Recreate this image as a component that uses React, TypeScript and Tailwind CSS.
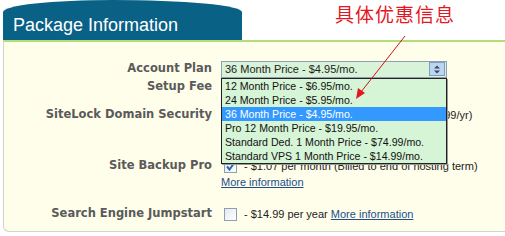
import React from 'react';

const plans = [
  '12 Month Price - $6.95/mo.',
  '24 Month Price - $5.95/mo.',
  '36 Month Price - $4.95/mo.',
  'Pro 12 Month Price - $19.95/mo.',
  'Standard Ded. 1 Month Price - $74.99/mo.',
  'Standard VPS 1 Month Price - $14.99/mo.',
];

function Checkbox({ checked }: { checked?: boolean }) {
  return (
    <div className="w-[13px] h-[13px] border border-[#8a9fb5] bg-gradient-to-br from-[#e6e9ee] to-white flex items-center justify-center shrink-0">
      {checked && (
        <svg width="11" height="11" viewBox="0 0 11 11">
          <path d="M2 5.5 L4.5 8.5 L9.5 1.5" fill="none" stroke="#2b66b8" strokeWidth="2" />
        </svg>
      )}
    </div>
  );
}

export default function App() {
  const label = "w-[208px] text-right font-bold text-[#5a5a5a] text-[11.5px] shrink-0";
  const verdana = { fontFamily: '"DejaVu Sans", Verdana, sans-serif' };
  return (
    <div className="relative w-[505px] h-[236px] bg-white overflow-hidden" style={{ fontFamily: '"Liberation Sans", Arial, sans-serif' }}>
      {/* header tab */}
      <div className="ml-[3px] w-[239px] h-[40px] bg-[#0a6186] rounded-tl-[110px_12px] rounded-tr-[129px_12px] text-white text-[18px] leading-none pl-[10px] pt-[16px]">
        Package Information
      </div>

      <div className="absolute left-[335px] top-[4px] text-[19px] tracking-[1px] leading-none text-[#e3171f]" style={{ fontFamily: '"Noto Sans CJK SC", sans-serif' }}>
        具体优惠信息
      </div>

      {/* panel */}
      <div className="relative ml-[3px] h-[192px] bg-[#fffeea] border-t-2 border-t-[#b3dc7b] border-l border-b border-l-[#d2d2c8] border-b-[#d2d2c8] rounded-bl-[6px] pt-[18px] text-[11px] text-[#222]">
        <div className="flex items-center h-[18px]">
          <div className={label} style={verdana}>Account Plan</div>
          <div className="ml-[9px] w-[226px] h-[17px] border border-[#8f9faf] bg-[#d8f3d8] flex items-center pl-[3px] pr-[1px]">
            <span className="flex-1">36 Month Price - $4.95/mo.</span>
            <div className="w-[16px] h-[14px] bg-[#bcd6f2] border border-[#7e9dc0] flex items-center justify-center">
              <svg width="6" height="9" viewBox="0 0 6 9">
                <path d="M0 3.5 L3 0.5 L6 3.5 Z M0 5.5 L3 8.5 L6 5.5 Z" fill="#3b4a5c" />
              </svg>
            </div>
          </div>
        </div>
        <div className="flex items-center h-[18px]">
          <div className={label} style={verdana}>Setup Fee</div>
        </div>
        <div className="flex items-center h-[18px] mt-[10px]">
          <div className={label} style={verdana}>SiteLock Domain Security</div>
          <div className="ml-[12px] flex items-center gap-[6px]">
            <Checkbox />
            <span>- $1.99 per month (Billed annually at $23.99/yr)</span>
          </div>
        </div>
        <div className="flex items-center h-[18px] mt-[33px]">
          <div className={label} style={verdana}>Site Backup Pro</div>
          <div className="ml-[12px] flex items-center gap-[7px]">
            <Checkbox checked />
            <span>- $1.07 per month (Billed to end of hosting term)</span>
          </div>
        </div>
        <div className="flex h-[14px] items-center">
          <a className="ml-[217px] text-[#1d4f8c] underline">More information</a>
        </div>
        <div className="flex items-center h-[18px] mt-[16px]">
          <div className={label} style={verdana}>Search Engine Jumpstart</div>
          <div className="ml-[12px] flex items-center gap-[7px]">
            <Checkbox />
            <span>- $14.99 per year <a className="text-[#1d4f8c] underline">More information</a></span>
          </div>
        </div>

        {/* open dropdown list */}
        <div className="absolute left-[217px] top-[36px] w-[226px] border border-[#222] bg-[#d6f4d6] shadow-[1px_1px_0_#999] text-[10.6px]">
          {plans.map((p, i) => (
            <div key={i} className={`h-[14px] leading-[14px] pl-[3px] ${i === 2 ? 'bg-[#3399ff] text-white' : 'text-[#111]'}`}>
              {p}
            </div>
          ))}
        </div>
      </div>

      {/* annotation arrow */}
      <svg className="absolute left-0 top-0 pointer-events-none" width="505" height="236">
        <line x1="405" y1="36" x2="361" y2="92" stroke="#d0101a" strokeWidth="1" />
        <path d="M356 99 L358 88 L365 93 Z" fill="#e3171f" />
      </svg>
    </div>
  );
}
